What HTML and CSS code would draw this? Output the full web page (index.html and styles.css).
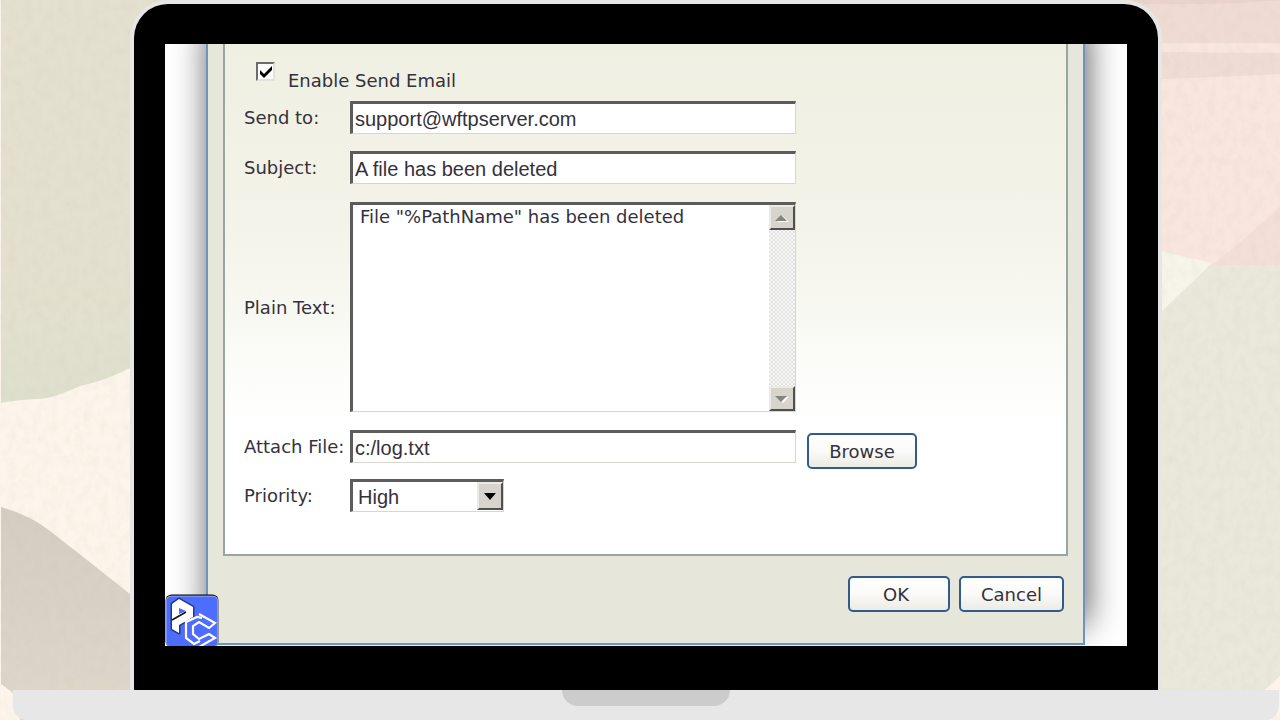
FILE: index.html
```html
<!DOCTYPE html>
<html lang="en">
<head>
<meta charset="utf-8">
<title>Send Email</title>
<meta name="viewport" content="width=device-width, initial-scale=1">
<link rel="stylesheet" href="styles.css">
</head>
<body>
<svg class="backdrop" viewBox="0 0 1280 720" preserveAspectRatio="none" aria-hidden="true">
  <defs>
    <filter id="paper" x="0" y="0" width="100%" height="100%">
      <feTurbulence type="fractalNoise" baseFrequency="0.12 0.09" numOctaves="3" seed="4"/>
      <feColorMatrix values="0 0 0 0 0.55  0 0 0 0 0.5  0 0 0 0 0.4  0.9 0 0 0 -0.35"/>
    </filter>
    <linearGradient id="sand" x1="0" y1="0" x2="0" y2="1">
      <stop offset="0" stop-color="#e4e0cf"/>
      <stop offset="0.7" stop-color="#e4e0cf"/>
      <stop offset="1" stop-color="#dedfcd"/>
    </linearGradient>
    <linearGradient id="stone" x1="0" y1="0" x2="0" y2="1">
      <stop offset="0" stop-color="#d3cdc2"/>
      <stop offset="1" stop-color="#ded8cb"/>
    </linearGradient>
  </defs>
  <rect width="1280" height="720" fill="#fdf5eb"/>
  <path fill="url(#sand)" d="M1 0H640V360H140L130 368Q105 381 80 386Q50 400 35 399Q15 400 1 403Z"/>
  <path fill="url(#stone)" d="M1 507Q30 515 50 531Q90 562 130 594V720H20L13 693L1 684Z"/>
  <rect x="640" width="640" height="270" fill="#f8e6df"/>
  <path fill="#efdbd3" d="M1130 0H1280V43H1150Z"/>
  <path fill="#e9d3cc" d="M1130 0H1280Q1220 5 1140 4Z"/>
  <path fill="#efdcd5" d="M1160 52L1280 53V74Q1220 77 1160 79Z"/>
  <path fill="#f3dfd8" d="M1280 206Q1245 240 1210 266H1280Z"/>
  <path fill="#f7f4ea" d="M1160 251L1211 263V266L1160 315Z"/>
  <path fill="#e9e8da" d="M1210 265H1280V692H1160V313Z"/>
  <path fill="#fdf5eb" d="M1280 676L1262 693V720H1280Z"/>
  <rect width="1280" height="720" filter="url(#paper)" opacity="0.25"/>
</svg>

<div class="lid">
  <main class="screen">
    <form class="dialog">
      <div class="panel">
        <div class="enable">
          <input class="check" type="checkbox" id="enable" checked>
          <label for="enable">Enable Send Email</label>
        </div>
        <div class="row">
          <label class="label" for="to">Send to:</label>
          <input class="sunken field" type="text" id="to" value="support@wftpserver.com">
        </div>
        <div class="row">
          <label class="label" for="subject">Subject:</label>
          <input class="sunken field" type="text" id="subject" value="A file has been deleted">
        </div>
        <div class="row row-tall">
          <label class="label" for="body">Plain Text:</label>
          <div class="sunken memo">
            <textarea class="memo-text" id="body">File "%PathName" has been deleted</textarea>
            <div class="scrollbar">
              <button class="raised" type="button" aria-label="Scroll up"><svg width="14" height="8" viewBox="0 0 14 8"><path fill="#fff" d="M2 8L14 8L8 2Z"/><path fill="#848480" d="M0 7L6 1L12 7Z"/></svg></button>
              <button class="raised" type="button" aria-label="Scroll down"><svg width="14" height="8" viewBox="0 0 14 8"><path fill="#fff" d="M2 2H14L8 8Z"/><path fill="#848480" d="M0 1H12L6 7Z"/></svg></button>
            </div>
          </div>
        </div>
        <div class="row row-attach">
          <label class="label" for="attach">Attach File:</label>
          <input class="sunken field" type="text" id="attach" value="c:/log.txt">
          <button class="button browse" type="button">Browse</button>
        </div>
        <div class="row row-priority">
          <label class="label" for="priority">Priority:</label>
          <div class="sunken combo">
            <select class="combo-select" id="priority">
              <option>Low</option>
              <option>Normal</option>
              <option selected>High</option>
            </select>
            <span class="raised combo-arrow" aria-hidden="true"><svg width="12" height="7" viewBox="0 0 12 7"><path d="M0 0H12L6 7Z"/></svg></span>
          </div>
        </div>
      </div>
      <div class="actions">
        <button class="button ok" type="submit">OK</button>
        <button class="button cancel" type="button">Cancel</button>
      </div>
    </form>
    <svg class="badge" width="54" height="54" viewBox="0 0 54 54" role="img" aria-label="PC logo">
      <rect x="0.5" y="0.5" width="53" height="53" rx="6" fill="#000"/>
      <rect x="1" y="2" width="52" height="51" rx="5" fill="#4d6dff" stroke="#e4e4ee" stroke-width="0.6"/>
      <path fill="none" stroke="#14205c" stroke-width="3" stroke-linejoin="round" opacity="0.7" d="M7 10L14 5L28 13V23L14 31V39L7 35Z"/>
      <path fill="#fff" fill-rule="evenodd" d="M7 10L14 5L28 13V23L14 31V39L7 35ZM14 14V20L21 17Z"/>
      <path d="M7 26L21 18" stroke="#111" stroke-width="1.5"/>
      <path fill="none" stroke="#fff" stroke-width="2.2" d="M34 20L50 29L44 34L34 28L28 32V40L34 45L44 40L50 44L34 53M37 24L32 23L21 28V44L29 50L35 47"/>
    </svg>
  </main>
</div>
<div class="base"><div class="notch"></div></div>
</body>
</html>
```
FILE: styles.css
```css
* {
  box-sizing: border-box;
}

body {
  margin: 0;
  min-height: 100vh;
  display: flex;
  flex-direction: column;
  position: relative;
  background: #fdf5eb;
  color: #35313c;
  font-family: "DejaVu Sans", Verdana, sans-serif;
  font-size: 18px;
}

.backdrop {
  position: absolute;
  inset: 0;
  width: 100%;
  height: 100%;
  z-index: -1;
}

/* Laptop */
.lid {
  margin: 0 118px 0 130px;
  padding: 40px 31px 44px;
  border: 4px solid #e6e6e6;
  border-bottom: 0;
  border-radius: 38px 38px 0 0;
  background: #000;
}

.screen {
  position: relative;
  padding: 0 42px 1px 41px;
  background: #fff;
  overflow: hidden;
}

.base {
  flex: 1;
  min-height: 30px;
  margin: 0 1px 0 13px;
  background: #e7e7e7;
  border-radius: 0 0 14px 14px;
}

.notch {
  width: 168px;
  height: 16px;
  margin: 0 auto;
  background: #ccc;
  border-radius: 0 0 16px 16px;
}

/* Dialog */
.dialog {
  padding: 0 15px 31px;
  background: #e6e7da;
  border: 2px solid #6b94c4;
  border-top: 0;
  box-shadow: 2px -20px 32px 0 rgba(0, 0, 0, 0.65);
}

.panel {
  padding: 18px 19px 42px;
  border: 2px solid #9ba5a0;
  border-top: 0;
  background: linear-gradient(#efefe2, #f3f3e9 35%, #fff 75%);
}

.enable {
  display: flex;
  gap: 13px;
  align-items: flex-start;
  padding-left: 12px;
  margin-bottom: 10px;
}

.enable label {
  line-height: 20px;
  margin-top: 9px;
}

.check {
  appearance: none;
  width: 19px;
  height: 19px;
  margin: 0;
  border: 2px solid;
  border-color: #6b6b68 #e4e2d8 #e4e2d8 #6b6b68;
  background: #fff;
}

.check:checked {
  background: #fff url("data:image/svg+xml,%3Csvg xmlns='http://www.w3.org/2000/svg' viewBox='0 0 14 14'%3E%3Cpath d='M1 5V9L5 13L13 5V1L5 9Z'/%3E%3C/svg%3E") center / 14px no-repeat;
}

.row {
  display: flex;
}

.row + .row {
  margin-top: 17px;
}

.row + .row-tall,
.row + .row-attach {
  margin-top: 18px;
}

.row + .row-priority {
  margin-top: 10px;
}

.label {
  flex: 0 0 106px;
  line-height: 33px;
  white-space: nowrap;
}

.row-tall .label {
  align-self: center;
}

.sunken {
  border: 3px solid;
  border-color: #5c5c5a #d8d6ce #d8d6ce #5c5c5a;
  border-right-width: 1px;
  border-bottom-width: 1px;
  background: #fff;
}

.field {
  flex: 0 1 446px;
  min-width: 0;
  height: 33px;
  margin: 0;
  padding: 1px 2px 0;
  color: inherit;
  font-family: "Liberation Sans", Arial, sans-serif;
  font-size: 20px;
  outline: 0;
}

.memo {
  flex: 0 1 446px;
  display: flex;
  height: 210px;
}

.memo-text {
  flex: 1;
  min-width: 0;
  padding: 2px 7px;
  border: 0;
  outline: 0;
  resize: none;
  overflow: hidden;
  background: transparent;
  color: inherit;
  font: inherit;
  line-height: 20px;
}

.scrollbar {
  flex: 0 0 26px;
  display: flex;
  flex-direction: column;
  justify-content: space-between;
  background: repeating-conic-gradient(#e2e2e0 0 25%, #f6f6f4 0 50%) 0 0 / 4px 4px;
}

.raised {
  display: flex;
  align-items: center;
  justify-content: center;
  height: 25px;
  padding: 0;
  border: 2px solid;
  border-color: #eceae4 #50504e #50504e #eceae4;
  background: #d6d4cc;
}

.button {
  height: 36px;
  padding: 0;
  border: 2px solid #2f5c8c;
  border-radius: 5px;
  background: linear-gradient(#fff, #fafaf8 50%, #ecebe5);
  color: inherit;
  font: inherit;
}

.browse {
  width: 110px;
  margin: 3px 0 0 11px;
}

.combo {
  position: relative;
  width: 154px;
  height: 33px;
}

.combo-select {
  appearance: none;
  width: 100%;
  height: 100%;
  padding: 1px 28px 0 5px;
  border: 0;
  outline: 0;
  background: transparent;
  color: inherit;
  font-family: "Liberation Sans", Arial, sans-serif;
  font-size: 20px;
}

.combo-arrow {
  position: absolute;
  top: 0;
  right: 0;
  width: 26px;
  height: 28px;
  pointer-events: none;
}

.actions {
  display: flex;
  justify-content: flex-end;
  gap: 9px;
  padding: 20px 4px 0 0;
}

.ok {
  width: 102px;
  padding-right: 6px;
}

.cancel {
  width: 105px;
}

.badge {
  position: absolute;
  left: 0;
  bottom: -2px;
}
```
